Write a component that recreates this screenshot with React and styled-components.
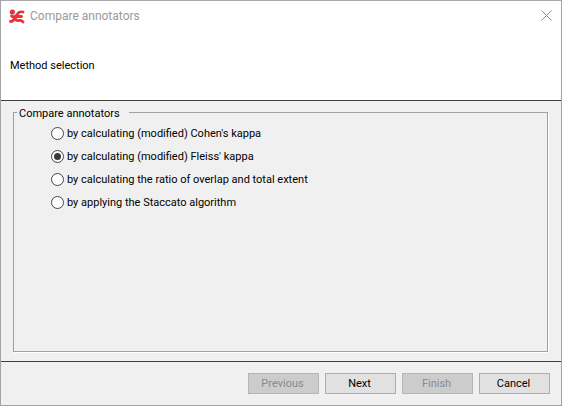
import React from 'react';
import styled, { createGlobalStyle } from 'styled-components';

const Global = createGlobalStyle`
  html, body { margin: 0; padding: 0; background: #fff; }
  body { font-family: Roboto, "Noto Sans", sans-serif; }
`;

const Dialog = styled.div`
  width: 562px; height: 406px; box-sizing: border-box;
  border: 1px solid #a3a3a3; border-top-color: #a8a8a8;
  display: flex; flex-direction: column; background: #f0f0f0; overflow: hidden;
`;
const TitleBar = styled.div`
  height: 30px; flex: none; background: #fff; display: flex; align-items: center;
  padding: 0 9px 0 8px; gap: 5px;
`;
const TitleText = styled.span`
  flex: 1; font-size: 12px; color: #9a9a9a; line-height: 30px;
`;
const Header = styled.div`
  height: 70px; flex: none; box-sizing: border-box; background: #fff;
  border-bottom: 1px solid #3f3f3f; padding: 0 9px 0 9px;
  display: flex; align-items: center;
`;
const HeaderText = styled.span`
  font-size: 11px; color: #000;
`;
const Body = styled.div`
  flex: 1; display: flex; flex-direction: column; padding: 3px 13px 9px 12px; min-height: 0;
`;
const Group = styled.fieldset`
  flex: 1; margin: 0; min-width: 0; box-sizing: border-box;
  border: 1px solid #a0a0a0; box-shadow: 1px 1px 0 #fff;
  padding: 0; display: flex; flex-direction: column;
`;
const Legend = styled.legend`
  font-size: 11px; color: #000; padding: 2px 9px 0 2px; margin-left: 3px; line-height: 15px;
`;
const Options = styled.div`
  display: flex; flex-direction: column; margin-top: 1px; padding-left: 37px;
`;
const Option = styled.label`
  height: 23px; display: flex; align-items: center; gap: 3px; font-size: 11px; color: #000;
`;
const Ring = styled.span`
  width: 13px; height: 13px; border-radius: 50%; box-sizing: border-box;
  border: 1px solid #444; background: #fff; display: flex;
  align-items: center; justify-content: center; flex: none;
  &::after {
    content: ""; width: 7px; height: 7px; border-radius: 50%;
    background: ${p => (p.$on ? '#3a3a3a' : 'transparent')};
  }
`;
const Footer = styled.div`
  height: 44px; flex: none; box-sizing: border-box; border-top: 1px solid #3f3f3f;
  display: flex; justify-content: flex-end; align-items: flex-start; gap: 6px;
  padding: 11px 11px 0 0;
`;
const Btn = styled.button`
  width: 71px; height: 21px; box-sizing: border-box; padding: 0 2px 1px 0; margin: 0;
  font: 11px Roboto, "Noto Sans", sans-serif;
  border: 1px solid ${p => (p.disabled ? '#b5b5b5' : '#adadad')};
  background: ${p => (p.disabled ? '#cccccc' : '#e1e1e1')};
  color: ${p => (p.disabled ? '#8a8a8a' : '#000')};
`;
const Close = styled.svg`
  width: 11px; height: 11px; flex: none; margin-bottom: 2px;
`;
const Logo = styled.svg`
  width: 16px; height: 15px; flex: none;
`;

const options = [
  ["by calculating (modified) Cohen's kappa", false],
  ["by calculating (modified) Fleiss' kappa", true],
  ['by calculating the ratio of overlap and total extent', false],
  ['by applying the Staccato algorithm', false],
];

export default function App() {
  return (
    <>
      <Global />
      <Dialog>
        <TitleBar>
          <Logo viewBox="0 0 16 15">
            <g fill="none" stroke="#e8323c" strokeWidth="2.8" strokeLinecap="round">
              <circle cx="3.4" cy="3" r="2.6" fill="#e8323c" stroke="none" />
              <path d="M2.5 7 C5 8.5 7 7.5 8.5 5 C9.5 3.2 12 2.4 14 3" />
              <path d="M8 7.5 L12.5 7.5" />
              <path d="M6.5 8 C6 11 7.5 12 10.5 11.4 C12 11.2 13 11.6 14 13" />
              <path d="M5.5 9.5 C4.5 11.5 3 12.5 1.5 12.5" />
            </g>
          </Logo>
          <TitleText>Compare annotators</TitleText>
          <Close viewBox="0 0 11 11">
            <path d="M0.5 0.5 L10.5 10.5 M10.5 0.5 L0.5 10.5" stroke="#8a8a8a" strokeWidth="1" fill="none" />
          </Close>
        </TitleBar>
        <Header><HeaderText>Method selection</HeaderText></Header>
        <Body>
          <Group>
            <Legend>Compare annotators</Legend>
            <Options>
              {options.map(([t, on]) => (
                <Option key={t}><Ring $on={on} />{t}</Option>
              ))}
            </Options>
          </Group>
        </Body>
        <Footer>
          <Btn disabled>Previous</Btn>
          <Btn>Next</Btn>
          <Btn disabled>Finish</Btn>
          <Btn>Cancel</Btn>
        </Footer>
      </Dialog>
    </>
  );
}
